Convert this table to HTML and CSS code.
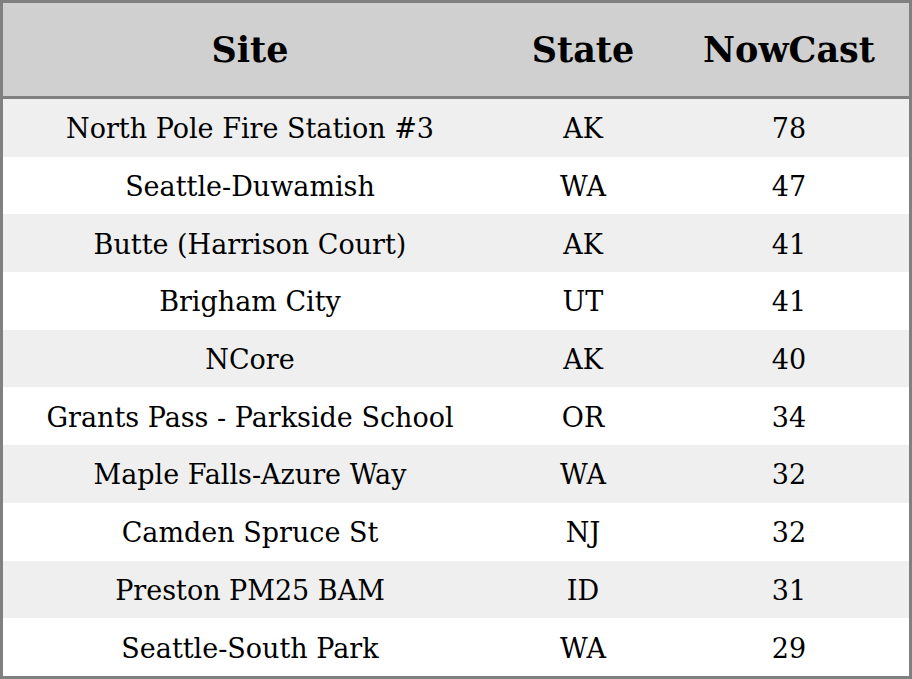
FILE: index.html
```html
<!DOCTYPE html>
<html>
<head>
<meta charset="utf-8">
<link rel="stylesheet" href="styles.css">
</head>
<body>
<table class="aq">
  <colgroup>
    <col class="c-site">
    <col class="c-state">
    <col class="c-now">
  </colgroup>
  <thead>
    <tr><th>Site</th><th>State</th><th>NowCast</th></tr>
  </thead>
  <tbody>
    <tr><td>North Pole Fire Station #3</td><td>AK</td><td>78</td></tr>
    <tr><td>Seattle-Duwamish</td><td>WA</td><td>47</td></tr>
    <tr><td>Butte (Harrison Court)</td><td>AK</td><td>41</td></tr>
    <tr><td>Brigham City</td><td>UT</td><td>41</td></tr>
    <tr><td>NCore</td><td>AK</td><td>40</td></tr>
    <tr><td>Grants Pass - Parkside School</td><td>OR</td><td>34</td></tr>
    <tr><td>Maple Falls-Azure Way</td><td>WA</td><td>32</td></tr>
    <tr><td>Camden Spruce St</td><td>NJ</td><td>32</td></tr>
    <tr><td>Preston PM25 BAM</td><td>ID</td><td>31</td></tr>
    <tr><td>Seattle-South Park</td><td>WA</td><td>29</td></tr>
  </tbody>
</table>
</body>
</html>
```

FILE: styles.css
```css
html, body {
  margin: 0;
  padding: 0;
  background: #ffffff;
}
.aq {
  width: 912px;
  height: 679px;
  border-collapse: separate;
  border-spacing: 0;
  border: 3px solid #808080;
  box-sizing: border-box;
  font-family: "DejaVu Serif", serif;
  color: #000;
}
.c-site { width: 494px; }
.c-state { width: 172px; }
.c-now { width: 240px; }
.aq th {
  background: #d0d0d0;
  height: 93px;
  padding: 0;
  font-size: 35px;
  font-weight: bold;
  text-align: center;
  border-bottom: 3px solid #808080;
}
.aq td {
  padding: 2px 0 0 0;
  height: 55.7px;
  font-size: 27px;
  text-align: center;
}
.aq tbody tr:nth-child(odd) td {
  background: #efefef;
}
```
